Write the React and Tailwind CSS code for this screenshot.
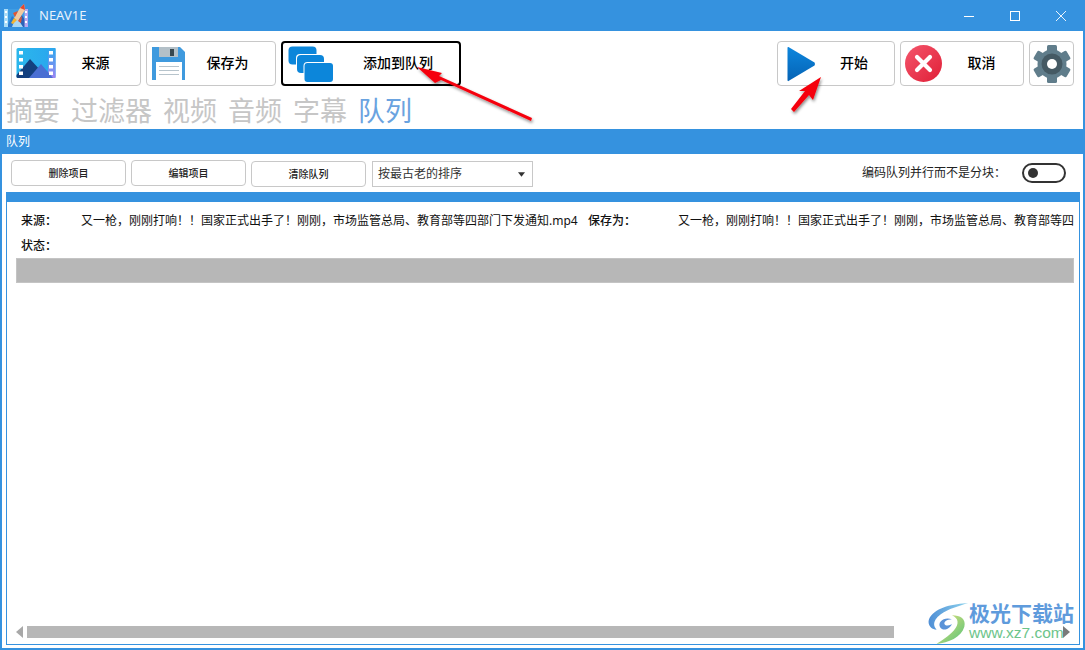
import React from "react";

const FONT = "font-['Noto_Sans','Noto_Sans_CJK_SC',sans-serif]";

function AppIcon() {
  return (
    <svg width="27" height="25" viewBox="0 0 27 25" className="block">
      <rect x="2" y="6" width="24" height="18" fill="#3f9de4" />
      <path d="M8 24 L14 15 L22 24Z" fill="#a9d6f3" />
      <path d="M15 14 L19 11 L25 20 L25 24 L21 24Z" fill="#2b62b8" />
      <path d="M5 24 L10 13 L13 16 L10 24Z" fill="#2a78cf" />
      <rect x="2" y="6" width="4" height="18" fill="#a9dcf7" />
      <rect x="22.5" y="6" width="3.5" height="18" fill="#b9a8f0" />
      <g fill="#fff">
        <rect x="3" y="8" width="2" height="2" />
        <rect x="3" y="13" width="2" height="2" />
        <rect x="3" y="18" width="2" height="2" />
        <rect x="23" y="8" width="2" height="2" />
        <rect x="23" y="13" width="2" height="2" />
        <rect x="23" y="18" width="2" height="2" />
      </g>
      <path d="M12 15 L18 5 L22 1 L23 7 L16 18Z" fill="#f2c9a0" />
      <path d="M18 5 L22 1 L23 7Z" fill="#e5472e" />
      <path d="M11 10 L16 8 L13 14Z M16 18 L20 13 L19 20Z" fill="#e5562f" />
      <path d="M9 20 L12 15 L15 17 L11 21Z" fill="#f5b52f" />
    </svg>
  );
}

function SourceIcon() {
  return (
    <svg width="40" height="31" viewBox="0 0 40 31" className="block">
      <defs>
        <linearGradient id="sky" x1="0" y1="0" x2="1" y2="0">
          <stop offset="0" stopColor="#2bb7ec" />
          <stop offset="1" stopColor="#2aa5ee" />
        </linearGradient>
        <linearGradient id="edge" x1="0" y1="0" x2="0" y2="1">
          <stop offset="0" stopColor="#2aa9ee" />
          <stop offset="1" stopColor="#a084f2" />
        </linearGradient>
      </defs>
      <rect x="0.5" y="0" width="39" height="30" rx="1.5" fill="url(#sky)" />
      <rect x="32" y="0" width="7.5" height="30" fill="url(#edge)" />
      <path d="M0.5 27 L14 11 L25 23 L20 30 L2 30 Q0.5 30 0.5 28.5Z" fill="#14407f" />
      <path d="M13 30 L25 16 L37 30Z" fill="#4a6fd3" />
      <g fill="#fff">
        <rect x="3" y="3" width="4" height="3.5" />
        <rect x="3" y="10" width="4" height="3.5" />
        <rect x="3" y="17" width="4" height="3.5" />
        <rect x="3" y="23.5" width="4" height="3.5" />
        <rect x="33" y="3" width="4" height="3.5" />
        <rect x="33" y="10" width="4" height="3.5" />
        <rect x="33" y="17" width="4" height="3.5" />
        <rect x="33" y="23.5" width="4" height="3.5" />
      </g>
    </svg>
  );
}

function SaveIcon() {
  return (
    <svg width="33" height="33" viewBox="0 0 33 33" className="block">
      <path d="M0 0 H28 L33 5 V33 H0Z" fill="#3f9ade" />
      <rect x="7" y="0" width="19" height="10" fill="#b3c0c8" />
      <rect x="18" y="2" width="4" height="7" fill="#37474f" />
      <rect x="4" y="15" width="26" height="18" fill="#fff" />
      <g fill="#b7c4cc">
        <rect x="7" y="19" width="20" height="1" />
        <rect x="7" y="23" width="20" height="1" />
        <rect x="7" y="27" width="20" height="1" />
      </g>
    </svg>
  );
}

function QueueIcon() {
  return (
    <svg width="45" height="36" viewBox="0 0 45 36" className="block">
      <rect x="0.5" y="0.5" width="28" height="18" rx="4" fill="#0c86da" />
      <rect x="8" y="8" width="28" height="19" rx="4" fill="#fff" />
      <rect x="9" y="9" width="27" height="18" rx="4" fill="#0c86da" />
      <rect x="15.5" y="16" width="29.5" height="20" rx="4" fill="#fff" />
      <rect x="16.5" y="17" width="28.5" height="19" rx="3" fill="#0c86da" />
    </svg>
  );
}

function PlayIcon() {
  return (
    <svg width="29" height="36" viewBox="0 0 30 36" className="block" preserveAspectRatio="none">
      <defs>
        <linearGradient id="pl" x1="0" y1="0" x2="0" y2="1">
          <stop offset="0" stopColor="#0d86dd" />
          <stop offset="1" stopColor="#0563b5" />
        </linearGradient>
      </defs>
      <path d="M1.5 1 Q0.5 0.5 0.5 2 V34 Q0.5 35.5 1.5 35 L28.5 19.5 Q29.5 18 28.5 16.5Z" fill="url(#pl)" />
    </svg>
  );
}

function CancelIcon() {
  return (
    <svg width="37" height="37" viewBox="0 0 37 37" className="block">
      <defs>
        <linearGradient id="cn" x1="0" y1="0" x2="1" y2="1">
          <stop offset="0" stopColor="#f4566c" />
          <stop offset="1" stopColor="#e01f37" />
        </linearGradient>
      </defs>
      <circle cx="18.5" cy="18.5" r="18.5" fill="url(#cn)" />
      <path d="M12 12 L25 25 M25 12 L12 25" stroke="#fff" strokeWidth="4.2" strokeLinecap="round" />
    </svg>
  );
}

function GearIcon() {
  const teeth = [0, 60, 120];
  return (
    <svg width="38" height="38" viewBox="0 0 38 38" className="block">
      {teeth.map((a) => (
        <rect key={a} x="14" y="0" width="10" height="38" rx="1.5" fill="#607d8b" transform={`rotate(${a} 19 19)`} />
      ))}
      <circle cx="19" cy="19" r="14.5" fill="#607d8b" />
      <circle cx="19" cy="19" r="10.5" fill="#455a64" />
      <circle cx="19" cy="19" r="5" fill="#fff" />
    </svg>
  );
}

function ToolBtn({ icon, label, className, iconBox, labelClass }) {
  return (
    <button className={`h-[45px] flex items-center rounded-[4px] bg-white shrink-0 ${className}`}>
      <span className={`flex justify-center shrink-0 ${iconBox}`}>{icon}</span>
      {label ? <span className={`flex-1 text-center text-[14px] text-black font-medium pb-[2px] ${labelClass || ""}`}>{label}</span> : null}
    </button>
  );
}

function SmallBtn({ label, className }) {
  return (
    <button className={`w-[115px] h-[26px] rounded-[4px] border border-[#c8c8c8] bg-white text-[10px] font-medium text-[#222] ${className || ""}`}>
      {label}
    </button>
  );
}

const NAME = "又一枪，刚刚打响！！国家正式出手了！刚刚，市场监管总局、教育部等四部门下发通知";

function Watermark() {
  return (
    <div className="absolute left-[927px] top-[601px] w-[150px] h-[44px] pointer-events-none">
      <svg width="46" height="43" viewBox="0 0 48 45" className="absolute left-0 top-0">
        <defs>
          <linearGradient id="wm1" x1="0" y1="0" x2="1" y2="0">
            <stop offset="0" stopColor="#4f8fd6" />
            <stop offset="1" stopColor="#8fd4ee" />
          </linearGradient>
          <linearGradient id="wm2" x1="0" y1="0" x2="1" y2="1">
            <stop offset="0" stopColor="#e8e27a" />
            <stop offset="1" stopColor="#55c27a" />
          </linearGradient>
        </defs>
        <path d="M43 2 C28 3 10 6 3 17 C-1 24 4 30 10 30 C6 26 6 20 14 14 C22 8 34 5 43 2Z" fill="url(#wm1)" />
        <path d="M10 45 C22 44 36 38 39 27 C41 19 35 15 26 15 C33 18 34 24 28 31 C23 37 14 42 10 45Z" fill="url(#wm2)" />
        <path d="M14 28 C10 22 18 16 26 19 C21 19 16 22 19 25 C22 27 26 24 26 24 C24 29 17 32 14 28Z" fill="#5b93d8" />
      </svg>
      <div className="absolute left-[42px] top-[-2px] text-[21px] leading-[26px] font-bold text-[#5f9bdc] whitespace-nowrap font-['Noto_Sans_CJK_SC',sans-serif]">极光下载站</div>
      <div className="absolute left-[42px] top-[23px] text-[15.5px] leading-[18px] text-[#6cc48a] whitespace-nowrap font-['Liberation_Sans',sans-serif]">www.xz7.com</div>
    </div>
  );
}

function Arrows() {
  return (
    <svg width="1085" height="650" viewBox="0 0 1085 650" className="absolute left-0 top-0 pointer-events-none">
      <defs>
        <filter id="sh" x="-30%" y="-30%" width="160%" height="160%">
          <feDropShadow dx="1" dy="2" stdDeviation="1.5" floodColor="#000" floodOpacity="0.45" />
        </filter>
      </defs>
      <g filter="url(#sh)" fill="#f5040c">
        <path d="M532 118 L531 121 L441 80 L435 83 L417 67 L442 73 L439 76Z" />
        <path d="M821 77 L813 100 L809 95 L794 112 L791 109 L805 91 L799 91Z" />
      </g>
    </svg>
  );
}

export default function App() {
  return (
    <div className={`relative w-[1085px] h-[650px] overflow-hidden bg-white flex flex-col ${FONT}`}>
      <header className="h-[31px] shrink-0 bg-[#3592df] flex items-center text-white">
        <span className="ml-[2px] w-[28px]"><AppIcon /></span>
        <span className="ml-[9px] text-[13px] text-[#e8f3fc]">NEAV1E</span>
        <div className="ml-auto mr-[1px] flex items-center">
          <span className="w-[46px] flex justify-center">
            <svg width="10" height="10" viewBox="0 0 10 10"><path d="M0 5.5H10" stroke="#fff" /></svg>
          </span>
          <span className="w-[46px] flex justify-center">
            <svg width="10" height="10" viewBox="0 0 10 10"><rect x="0.5" y="0.5" width="9" height="9" fill="none" stroke="#fff" /></svg>
          </span>
          <span className="w-[46px] flex justify-center">
            <svg width="10" height="10" viewBox="0 0 10 10"><path d="M0 0L10 10M10 0L0 10" stroke="#fff" strokeWidth="0.9" /></svg>
          </span>
        </div>
      </header>

      <div className="flex-1 min-h-0 flex flex-col border-x-2 border-b-2 border-[#3592df]">
        <div className="mt-[10px] pl-[9px] pr-[9px] flex items-start gap-[5px]">
          <ToolBtn icon={<SourceIcon />} label="来源" iconBox="w-[48px]" labelClass="pr-[9px]" className="w-[130px] border border-[#c8c8c8]" />
          <ToolBtn icon={<SaveIcon />} label="保存为" iconBox="w-[43px]" labelClass="pr-[10px]" className="w-[130px] border border-[#c8c8c8]" />
          <ToolBtn icon={<QueueIcon />} label="添加到队列" iconBox="w-[55px]" labelClass="pr-[1px]" className="w-[180px] border-2 border-black" />
          <div className="flex-1" />
          <ToolBtn icon={<PlayIcon />} label="开始" iconBox="w-[47px]" labelClass="pr-[11px]" className="w-[118px] border border-[#c8c8c8]" />
          <ToolBtn icon={<CancelIcon />} label="取消" iconBox="w-[45px]" labelClass="pr-[6px]" className="w-[124px] border border-[#c8c8c8]" />
          <ToolBtn icon={<GearIcon />} label="" iconBox="w-[43px]" className="w-[45px] border border-[#c8c8c8]" />
        </div>

        <nav className="mt-[6px] pl-[4px] h-[37px] flex items-center gap-[11px] text-[27px] leading-[37px] text-[#c6c6c6]">
          <span>摘要</span>
          <span>过滤器</span>
          <span>视频</span>
          <span>音频</span>
          <span>字幕</span>
          <span className="text-[#6aa3e0]">队列</span>
        </nav>

        <div className="h-[25px] shrink-0 bg-[#3592df] pl-[4px] text-[12px] leading-[25px] text-white">队列</div>

        <div className="mt-[6px] pl-[9px] pr-[17px] h-[27px] flex items-start">
          <SmallBtn label="删除项目" />
          <SmallBtn label="编辑项目" className="ml-[5px]" />
          <SmallBtn label="清除队列" className="ml-[5px] mt-[1px]" />
          <div className="ml-[6px] mt-[1px] w-[161px] h-[26px] border border-[#c8c8c8] bg-white flex items-center pl-[5px] pr-[7px] text-[12px] text-[#333]">
            <span className="flex-1">按最古老的排序</span>
            <svg width="7" height="5" viewBox="0 0 8 5"><path d="M0 0H8L4 5Z" fill="#333" /></svg>
          </div>
          <div className="ml-auto mt-[3px] flex items-center h-[20px]">
            <span className="text-[12px] text-[#222]">编码队列并行而不是分块：</span>
            <span className="ml-[16px] w-[44px] h-[20px] rounded-full border-2 border-[#333] bg-white flex items-center pl-[4px]">
              <span className="w-[10px] h-[10px] rounded-full bg-[#333]" />
            </span>
          </div>
        </div>

        <section className="mt-[5px] ml-[4px] mr-[3px] mb-[3px] flex-1 min-h-0 flex flex-col border-x border-b border-[#3592df] border-t-[10px]">
          <div className="pl-[14px] pr-[5px] pt-[10px] text-[12px] text-[#111] leading-[18px] overflow-hidden">
            <div className="flex whitespace-nowrap overflow-hidden">
              <span className="w-[60px] shrink-0 font-medium">来源：</span>
              <span className="w-[507px] shrink-0">{NAME}.mp4</span>
              <span className="w-[90px] shrink-0 font-medium">保存为：</span>
              <span>{NAME}.mp4</span>
            </div>
            <div className="mt-[7px] font-medium">状态：</div>
          </div>
          <div className="mt-[3px] ml-[9px] mr-[5px] h-[25px] shrink-0 bg-[#b7b7b7] border border-[#c4c4c4]" />
          <div className="mt-auto mb-[6px] ml-[9px] mr-[5px] h-[13px] flex items-center">
            <svg width="7" height="12" viewBox="0 0 7 12" className="shrink-0"><path d="M7 0V12L0 6Z" fill="#a8a8a8" /></svg>
            <div className="ml-[4px] w-[867px] h-[12px] bg-[#b7b7b7]" />
            <svg width="7" height="12" viewBox="0 0 7 12" className="shrink-0 ml-auto mr-[4px]"><path d="M0 0V12L7 6Z" fill="#7a7a7a" /></svg>
          </div>
        </section>
      </div>

      <Arrows />
      <Watermark />
    </div>
  );
}
